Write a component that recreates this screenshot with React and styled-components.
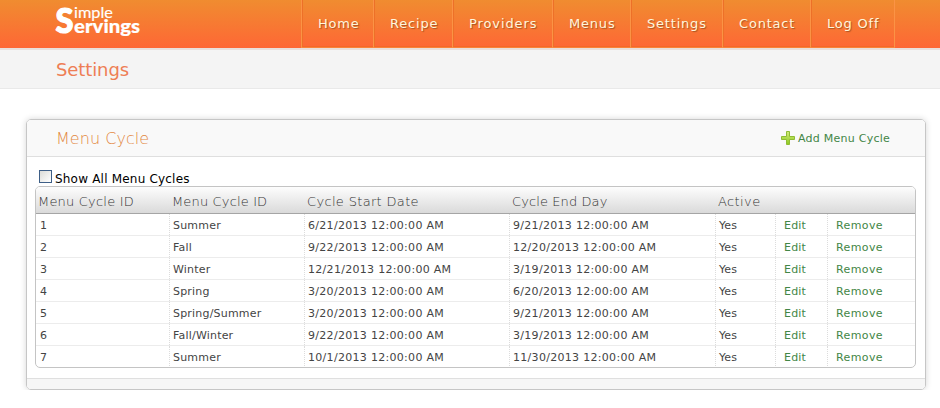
import React from "react";
import styled, { createGlobalStyle } from "styled-components";

const GlobalStyle = createGlobalStyle`
  * { box-sizing: border-box; }
  body { margin: 0; background: #fff; font-family: Verdana, "DejaVu Sans", sans-serif; overflow: hidden; }
  a { text-decoration: none; color: inherit; }
`;

const Header = styled.header`
  display: flex;
  height: 50px;
  padding-left: 54px;
  background: linear-gradient(#f08c30, #fe6735);
  border-bottom: 2px solid #e9dfdb;
  background-clip: padding-box;
`;

const Logo = styled.svg`
  display: block;
  width: 247px;
  height: 48px;
  fill: #fff;
  stroke: #fff;
  stroke-linejoin: round;
  overflow: visible;
  font-family: Lato, sans-serif;
`;

const Nav = styled.nav`
  display: flex;
  height: 48px;
  border-left: 1px solid #fb9345;
`;

const NavLink = styled.a`
  width: ${(p) => p.$width}px;
  padding: 16px 0 0 16px;
  font-size: 13px;
  line-height: 16px;
  letter-spacing: ${(p) => p.$spacing}px;
  white-space: nowrap;
  color: #fff6dc;
  text-shadow: 1px 1px 1px #a95424;
  border-right: 1px solid #fb9345;
  border-bottom: 1px solid #fb8238;
  box-shadow: inset 1px 0 #ed7028, inset 0 -1px #f4682a;
`;

const TitleBar = styled.div`
  height: 39px;
  padding: 10px 0 0 56px;
  background: #f4f4f4;
  border-bottom: 1px solid #e9e9e9;
`;

const PageTitle = styled.h1`
  margin: 0;
  font-size: 18px;
  line-height: 20px;
  font-weight: 400;
  letter-spacing: -0.1px;
  color: #ee7e55;
`;

const Panel = styled.section`
  width: 900px;
  height: 271px;
  margin: 30px 0 0 26px;
  display: flex;
  flex-direction: column;
  border: 1px solid #c6c6c6;
  border-radius: 5px;
  box-shadow: 0 0 6px rgba(0, 0, 0, 0.16);
  overflow: hidden;
`;

const PanelHeader = styled.div`
  display: flex;
  justify-content: space-between;
  height: 37px;
  padding: 9px 34px 0 29px;
  background: #f9f9f9;
  border-bottom: 1px solid #dfdfdf;
`;

const PanelTitle = styled.h2`
  margin: 0;
  font-size: 16px;
  line-height: 20px;
  font-weight: 200;
  letter-spacing: 0.05px;
  color: #e3883f;
`;

const AddLink = styled.a`
  display: flex;
  align-items: flex-start;
  width: 110px;
  padding-top: 2px;
  gap: 3px;
  font-size: 11px;
  line-height: 16px;
  letter-spacing: 0.25px;
  white-space: nowrap;
  color: #438646;
`;

const PlusIcon = styled.svg`
  width: 14px;
  height: 14px;
  flex: none;
`;

const PanelBody = styled.div`
  flex: 1;
  padding: 13px 8px 0;
`;

const Toggle = styled.label`
  display: flex;
  height: 16px;
  padding-left: 4px;
  gap: 3px;
  font-size: 12px;
  line-height: 19px;
  letter-spacing: 0.2px;
  color: #000;
`;

const Checkbox = styled.input`
  appearance: none;
  width: 13px;
  height: 13px;
  margin: 0;
  border: 1px solid #3e5f87;
  background: linear-gradient(135deg, #dcdcd7, #fff);
`;

const Grid = styled.div`
  width: 881px;
  height: 182px;
  border: 1px solid #c4c4c4;
  border-radius: 5px;
  overflow: hidden;
`;

const columns = "134px 135px 205px 206px 60px 52px 1fr";

const HeadRow = styled.div`
  display: grid;
  grid-template-columns: ${columns};
  height: 27px;
  background: linear-gradient(#fdfdfd, #dadada);
  border-bottom: 1px solid #a5a5a5;
`;

const HeadCell = styled.div`
  padding: 7px 0 0 2px;
  font-size: 13px;
  line-height: 16px;
  font-weight: 200;
  letter-spacing: ${(p) => p.$spacing}px;
  white-space: nowrap;
  color: #333;
`;

const Row = styled.div`
  display: grid;
  grid-template-columns: ${columns};
  height: 22px;
  border-bottom: 1px solid #ececec;
  &:last-child { border-bottom: 0; }
`;

const Cell = styled.div`
  padding: 5px 0 0 ${(p) => (p.$action ? 8 : 3)}px;
  font-size: 11px;
  line-height: 14px;
  letter-spacing: ${(p) => p.$spacing || 0}px;
  white-space: nowrap;
  color: ${(p) => (p.$action ? "#438646" : "#444")};
  border-right: 1px dotted #dcdcdc;
  &:first-child { padding-left: 4px; }
  &:last-child { border-right: 0; }
`;

const PanelFooter = styled.div`
  height: 11px;
  background: #f6f6f6;
  border-top: 1px solid #dfdfdf;
`;

const navItems = [
  ["Home", 72, 0.8],
  ["Recipe", 79, 0.8],
  ["Providers", 100, 0.9],
  ["Menus", 78, 0.8],
  ["Settings", 92, 0.8],
  ["Contact", 88, 0.8],
  ["Log Off", 84, 0.8],
];

const headings = [
  ["Menu Cycle ID", 0.2],
  ["Menu Cycle ID", 0.15],
  ["Cycle Start Date", 0.33],
  ["Cycle End Day", 0.1],
  ["Active", 0.4],
];

const cycles = [
  ["1", "Summer", "6/21/2013 12:00:00 AM", "9/21/2013 12:00:00 AM"],
  ["2", "Fall", "9/22/2013 12:00:00 AM", "12/20/2013 12:00:00 AM"],
  ["3", "Winter", "12/21/2013 12:00:00 AM", "3/19/2013 12:00:00 AM"],
  ["4", "Spring", "3/20/2013 12:00:00 AM", "6/20/2013 12:00:00 AM"],
  ["5", "Spring/Summer", "3/20/2013 12:00:00 AM", "9/21/2013 12:00:00 AM"],
  ["6", "Fall/Winter", "9/22/2013 12:00:00 AM", "3/19/2013 12:00:00 AM"],
  ["7", "Summer", "10/1/2013 12:00:00 AM", "11/30/2013 12:00:00 AM"],
];

export default function App() {
  return (
    <>
      <GlobalStyle />
      <Header>
        <Logo viewBox="0 0 247 48" role="img" aria-label="Simple Servings">
          <text x="1.5" y="33" fontSize="35" fontWeight="900" strokeWidth="1.2" textLength="18" lengthAdjust="spacingAndGlyphs">S</text>
          <text x="20" y="18" fontSize="15" fontWeight="400" strokeWidth="0.15" textLength="39" lengthAdjust="spacingAndGlyphs">imple</text>
          <text x="20" y="33" fontSize="19" fontWeight="900" strokeWidth="0.2" textLength="66" lengthAdjust="spacingAndGlyphs">ervings</text>
        </Logo>
        <Nav>
          {navItems.map(([label, width, spacing]) => (
            <NavLink key={label} href="#" $width={width} $spacing={spacing}>{label}</NavLink>
          ))}
        </Nav>
      </Header>
      <TitleBar>
        <PageTitle>Settings</PageTitle>
      </TitleBar>
      <Panel>
        <PanelHeader>
          <PanelTitle>Menu Cycle</PanelTitle>
          <AddLink href="#">
            <PlusIcon viewBox="0 0 14 14">
              <defs>
                <linearGradient id="plus" x1="0" y1="0" x2="0" y2="1">
                  <stop offset="0" stopColor="#d4ec7c" />
                  <stop offset="1" stopColor="#8cc91f" />
                </linearGradient>
              </defs>
              <path d="M5.5 .5h3v5h5v3h-5v5h-3v-5h-5v-3h5z" fill="url(#plus)" stroke="#8fbc34" />
            </PlusIcon>
            Add Menu Cycle
          </AddLink>
        </PanelHeader>
        <PanelBody>
          <Toggle>
            <Checkbox type="checkbox" />
            Show All Menu Cycles
          </Toggle>
          <Grid>
            <HeadRow>
              {headings.map(([label, spacing], i) => (
                <HeadCell key={i} $spacing={spacing}>{label}</HeadCell>
              ))}
            </HeadRow>
            {cycles.map(([id, name, start, end]) => (
              <Row key={id}>
                <Cell>{id}</Cell>
                <Cell $spacing={0.2}>{name}</Cell>
                <Cell $spacing={0.3}>{start}</Cell>
                <Cell $spacing={0.3}>{end}</Cell>
                <Cell $spacing={0.1}>Yes</Cell>
                <Cell $action $spacing={0.2}><a href="#">Edit</a></Cell>
                <Cell $action $spacing={0.4}><a href="#">Remove</a></Cell>
              </Row>
            ))}
          </Grid>
        </PanelBody>
        <PanelFooter />
      </Panel>
    </>
  );
}
